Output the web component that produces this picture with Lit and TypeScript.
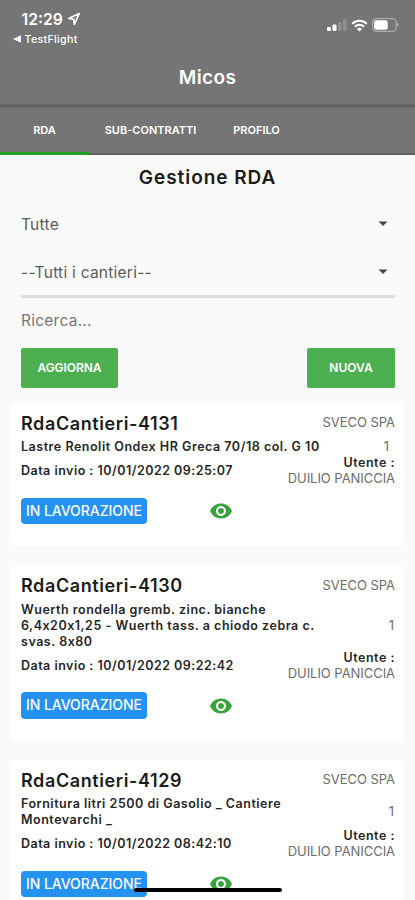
import { LitElement, html, css, svg } from "lit";
import { customElement, property } from "lit/decorators.js";

interface Rda {
  id: string;
  lines: string[];
  date: string;
  company: string;
  user: string;
  inset: number;
}

const ITEMS: Rda[] = [
  { id: "RdaCantieri-4131", lines: ["Lastre Renolit Ondex HR Greca 70/18 col. G 10"], date: "10/01/2022 09:25:07", company: "SVECO SPA", user: "DUILIO PANICCIA", inset: 6 },
  { id: "RdaCantieri-4130", lines: ["Wuerth rondella gremb. zinc. bianche", "6,4x20x1,25 - Wuerth tass. a chiodo zebra c.", "svas. 8x80"], date: "10/01/2022 09:22:42", company: "SVECO SPA", user: "DUILIO PANICCIA", inset: 1 },
  { id: "RdaCantieri-4129", lines: ["Fornitura litri 2500 di Gasolio _ Cantiere", "Montevarchi _"], date: "10/01/2022 08:42:10", company: "SVECO SPA", user: "DUILIO PANICCIA", inset: 1 },
];

@customElement("rda-card")
export class RdaCard extends LitElement {
  @property({ attribute: false }) item!: Rda;

  static styles = css`
    :host { display: block; background: #fff; border-radius: 6px; padding: 3px 9px 22px 11px; }
    .row { display: flex; justify-content: space-between; align-items: center; }
    .head { height: 33.5px; }
    .title { padding-top: 2px; font-size: 18px; font-weight: 600; letter-spacing: 0.6px; color: #1c1c1c; }
    .light { font-size: 13px; color: #6c6c6c; letter-spacing: -0.05px; line-height: 16px; }
    .count { margin: -1px 0 1px; }
    .small { font-size: 12.5px; font-weight: 600; letter-spacing: 0.52px; line-height: 16px; color: #262626; white-space: nowrap; }
    .date { letter-spacing: 0.48px; }
    .meta { height: 32px; }
    .user { text-align: right; }
    .user .light { margin: -1px 0 1px; }
    .foot { margin-top: 11px; height: 26px; justify-content: flex-start; }
    .chip { box-sizing: border-box; width: 126px; height: 26.5px; border-radius: 4px; background: #2492f0; color: #fff; font-size: 14px; font-weight: 500; letter-spacing: -0.05px; line-height: 26px; text-align: center; white-space: nowrap; }
    .eye { margin-left: 62px; width: 24px; height: 24px; fill: #36a43a; display: block; }
  `;

  render() {
    const r = this.item;
    return html`
      <div class="row head"><span class="title">${r.id}</span><span class="light company">${r.company}</span></div>
      <div class="row">
        <div>${r.lines.map((l) => html`<div class="small desc">${l}</div>`)}</div>
        <span class="light count" style="padding-right:${r.inset}px">1</span>
      </div>
      <div class="row meta">
        <span class="small date">Data invio : ${r.date}</span>
        <div class="user"><div class="small">Utente :</div><div class="light">${r.user}</div></div>
      </div>
      <div class="row foot">
        <span class="chip">IN LAVORAZIONE</span>
        <svg class="eye" viewBox="0 0 24 24"><path d="M12 4.5C7 4.5 2.73 7.61 1 12c1.73 4.39 6 7.5 11 7.5s9.27-3.11 11-7.5c-1.73-4.39-6-7.5-11-7.5zM12 17c-2.76 0-5-2.24-5-5s2.24-5 5-5 5 2.24 5 5-2.24 5-5 5zm0-8c-1.66 0-3 1.34-3 3s1.34 3 3 3 3-1.34 3-3-1.34-3-3-3z"/></svg>
      </div>`;
  }
}

@customElement("app-root")
export class AppRoot extends LitElement {
  static styles = css`
    :host { display: block; position: relative; height: 900px; overflow: hidden; background: #fafafa; font-family: Inter, "Liberation Sans", sans-serif; color: #1c1c1c; }
    .status { height: 50px; display: flex; justify-content: space-between; background: #757575; color: #fff; }
    .left { padding: 9px 0 0 21.5px; }
    .time { display: flex; align-items: center; gap: 4px; height: 20px; font-size: 15.7px; font-weight: 600; }
    .back { display: flex; align-items: center; gap: 4px; margin: 2px 0 0 -9px; height: 16px; font-size: 10.7px; font-weight: 500; letter-spacing: 0.3px; }
    .right { display: flex; align-items: center; gap: 4px; height: 20px; padding: 15px 16px 0 0; }
    svg { display: block; }
    .bar { height: 54px; background: #757575; color: #fff; display: flex; justify-content: center; align-items: center; font-size: 19px; font-weight: 600; letter-spacing: 0.4px; }
    .line { height: 4px; background: linear-gradient(#707070, #5f5f5f 50%, #6f6f6f); }
    .tabs { height: 47px; box-sizing: border-box; display: flex; background: #757575; border-bottom: 2px solid #626262; color: #fff; font-size: 11px; font-weight: 600; }
    .tab { box-sizing: border-box; height: 47px; padding-top: 1px; line-height: 42px; text-align: center; white-space: nowrap; }
    .t1 { width: 89px; border-bottom: 3px solid #22a127; }
    .t2 { width: 123px; }
    .t3 { width: 89px; }
    .page-title { height: 45px; line-height: 45px; text-align: center; font-size: 19px; font-weight: 600; letter-spacing: 0.95px; }
    .form { padding: 0 20px 0 21px; }
    .select { display: flex; justify-content: space-between; align-items: center; height: 48px; padding-right: 6px; font-size: 15.5px; letter-spacing: 0.25px; color: #5c5c5c; }
    .rule { height: 3px; margin: -1px 0 1px; background: #dedede; }
    .search { height: 49px; line-height: 44px; font-size: 15.5px; letter-spacing: 0.25px; color: #777; }
    .actions { display: flex; justify-content: space-between; }
    .btn { height: 39.5px; margin-bottom: 0.5px; border-radius: 2px; background: #4caf50; color: #fff; font-size: 12px; font-weight: 600; line-height: 40px; text-align: center; }
    .a { width: 97px; letter-spacing: -0.05px; }
    .b { width: 88px; }
    .list { display: flex; flex-direction: column; gap: 19px; padding: 14.5px 11px 0 10px; }
    .home { position: absolute; left: 134px; bottom: 8px; width: 148px; height: 4px; border-radius: 2px; background: #000; }
  `;

  render() {
    const arrow = svg`<svg width="12" height="6" viewBox="0 0 12 6"><path d="M1.5 .5h9L6 5z" fill="#444"/></svg>`;
    return html`
      <div class="status">
        <div class="left">
          <div class="time"><span class="clock">12:29</span>
            <svg width="14" height="14" viewBox="0 0 14 14"><path d="M12.3 1.5 1.7 6.5l5 .7.6 5.1z" fill="none" stroke="#fff" stroke-width="1.7" stroke-linejoin="round"/></svg>
          </div>
          <div class="back"><svg width="8" height="8" viewBox="0 0 8 8"><path d="M0 4 8 .3v7.4z" fill="#fff"/></svg><span>TestFlight</span></div>
        </div>
        <div class="right">
          <svg width="20" height="12" viewBox="0 0 20 12" fill="#fff"><rect x="0" y="8" width="4" height="4" rx="1"/><rect x="5.5" y="5.5" width="4" height="6.5" rx="1"/><rect x="11" y="3" width="3.6" height="9" rx="1" opacity=".2"/><rect x="16" y="0" width="3.6" height="12" rx="1" opacity=".2"/></svg>
          <svg width="17" height="13" viewBox="0 0 17 13" fill="none" stroke="#fff" stroke-width="2"><path d="M1.2 4.8a10.4 10.4 0 0 1 14.6 0M3.9 7.7a6.6 6.6 0 0 1 9.2 0"/><path d="M8.5 12.5 5.9 9.9a3.8 3.8 0 0 1 5.2 0z" fill="#fff" stroke="none"/></svg>
          <svg width="27" height="14" viewBox="0 0 27 14"><rect x=".7" y=".7" width="23.4" height="12.6" rx="3.6" fill="none" stroke="#fff" stroke-opacity=".4" stroke-width="1.2"/><rect x="2.2" y="2.2" width="13.5" height="9.6" rx="2.2" fill="#fff"/><path d="M25.2 4.8a2.4 2.4 0 0 1 0 4.4z" fill="#fff" opacity=".45"/></svg>
        </div>
      </div>
      <div class="bar"><span>Micos</span></div>
      <div class="line"></div>
      <div class="tabs"><div class="tab t1">RDA</div><div class="tab t2">SUB-CONTRATTI</div><div class="tab t3">PROFILO</div></div>
      <div class="page-title">Gestione RDA</div>
      <div class="form">
        <div class="select"><span>Tutte</span>${arrow}</div>
        <div class="select"><span>--Tutti i cantieri--</span>${arrow}</div>
        <div class="rule"></div>
        <div class="search">Ricerca...</div>
        <div class="actions"><div class="btn a">AGGIORNA</div><div class="btn b">NUOVA</div></div>
      </div>
      <div class="list">${ITEMS.map((i) => html`<rda-card .item=${i}></rda-card>`)}</div>
      <div class="home"></div>`;
  }
}
